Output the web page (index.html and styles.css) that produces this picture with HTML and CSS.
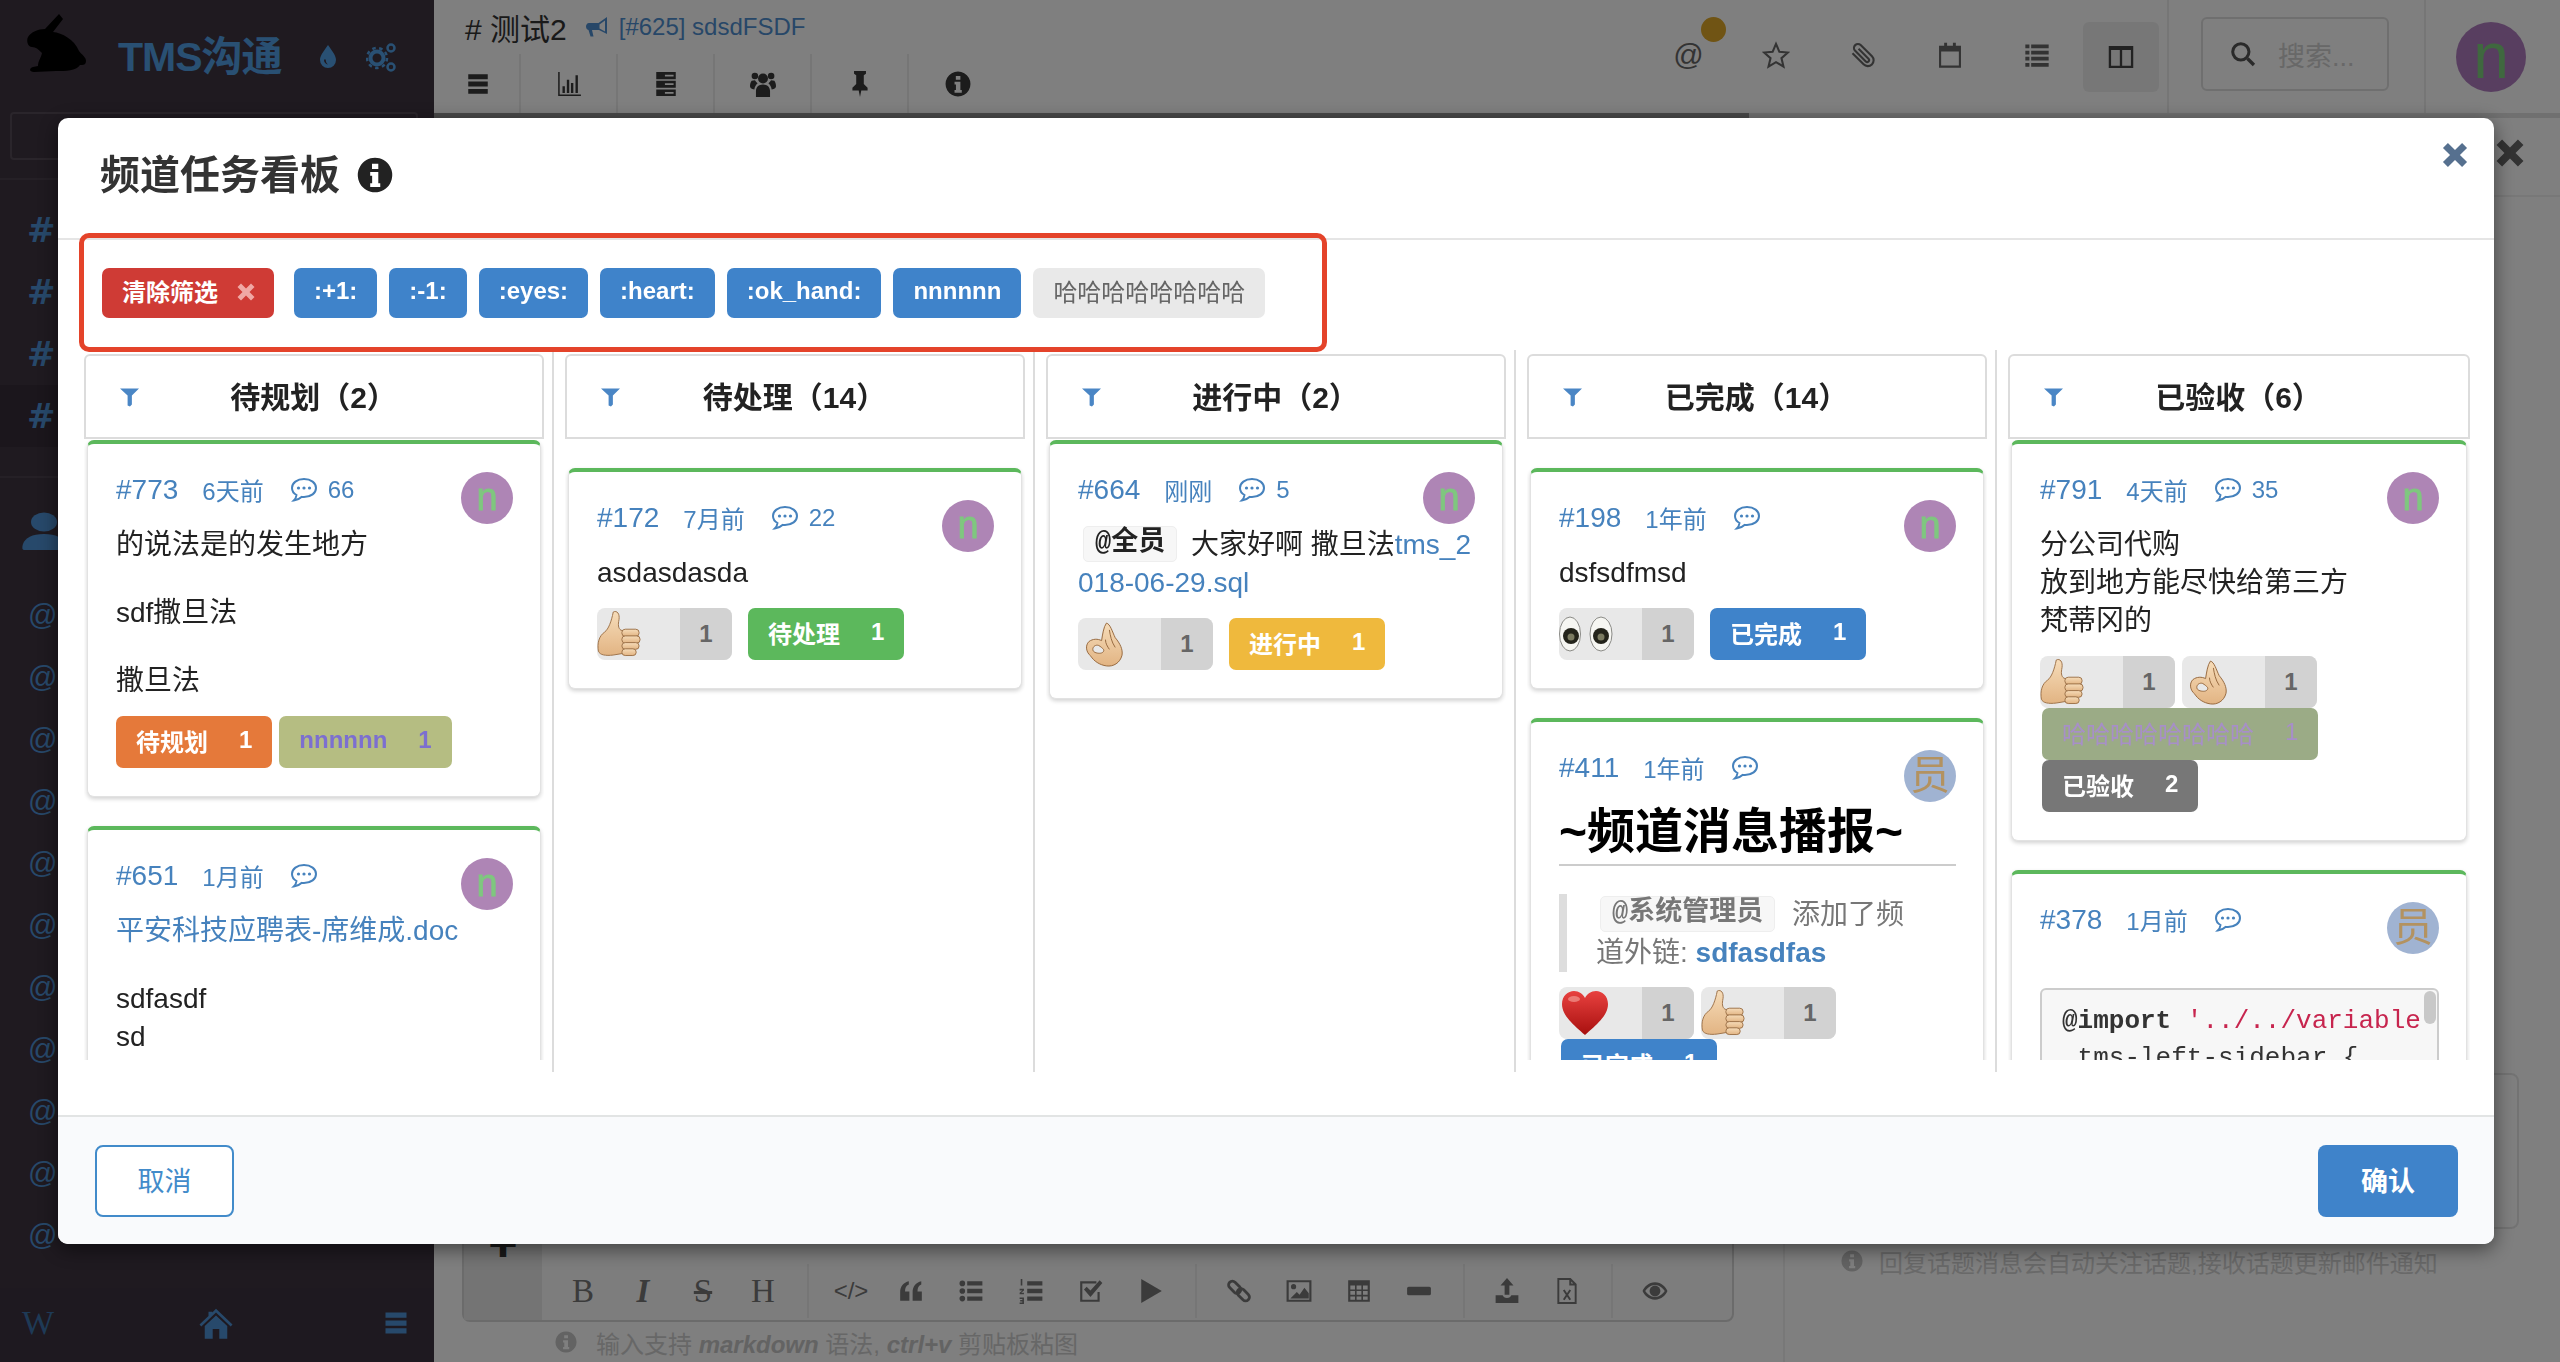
FILE: index.html
```html
<!DOCTYPE html>
<html lang="zh-CN">
<head>
<meta charset="utf-8">
<title>频道任务看板</title>
<link rel="stylesheet" href="styles.css">
</head>
<body>
<svg class="defs" aria-hidden="true">
  <symbol id="i-bars" viewBox="0 0 24 24"><path d="M3 3h18v4.500H3zM3 9.800h18v4.500H3zM3 16.500h18V21H3z"/></symbol>
  <symbol id="i-chart" viewBox="0 0 24 24"><path d="M2 1h1.400v20.600H23V23H2zM6 14h2.200v6.200H6zM10 8h2.200v12.200H10zM13.800 11H16v9.200h-2.200zM18 4h2.200v16.200H18z"/></symbol>
  <symbol id="i-server" viewBox="0 0 24 24"><path fill-rule="evenodd" d="M3 1h18v6.500H3zM11 3.400v1.600h8V3.400zM3 9h18v6.500H3zM11 11.400V13h8v-1.600zM3 17h18v6H3zM11 19.400V21h8v-1.600z"/></symbol>
  <symbol id="i-users" viewBox="0 0 24 24"><circle cx="12" cy="7" r="4.600"/><circle cx="4.500" cy="4.500" r="3"/><circle cx="19.500" cy="4.500" r="3"/><path d="M12 12.500c-4 0-6.500 2.600-6.500 6V24h13v-5.500c0-3.400-2.500-6-6.500-6zM1.500 9c-1 1.500-1.500 3-1.500 5 0 1.500 1 2.500 4 3 .4-2.300 1.400-4.200 3-5.600C6 10.500 5 9 4.500 8.500z"/><path d="M22.500 9c1 1.500 1.500 3 1.500 5 0 1.500-1 2.500-4 3-.4-2.300-1.400-4.200-3-5.600 1-.9 2-2.400 2.500-2.900z"/></symbol>
  <symbol id="i-pin" viewBox="0 0 24 24"><path d="M6.500 0h11v2.500L15.500 4v8l3.500 3.500V18h-5.800L12 24l-1.200-6H5v-2.500L8.500 12V4l-2-1.500z"/></symbol>
  <symbol id="i-info" viewBox="0 0 24 24"><path fill-rule="evenodd" d="M12 .5a11.500 11.500 0 1 0 .01 0zM10 4.500h4.200V8H10zM8.800 10h5.400v7.500h1.300V20H8.800v-2.500h1.300v-5H8.800z"/></symbol>
  <symbol id="i-horn" viewBox="0 0 24 24"><path fill-rule="evenodd" d="M22 2v17l-8-4H7l1.500 6.500H5.500L3.500 15C1.800 14.500 1 13 1 11.500S2 8 4 8h9.500zM20 5.500l-5.500 4v4l5.500 3z"/></symbol>
  <symbol id="i-star" viewBox="0 0 24 24"><path fill="none" stroke="currentColor" stroke-width="1.800" d="M12 2.500l2.900 6.800 7.300.6-5.500 4.800 1.700 7.200-6.400-3.800-6.400 3.800 1.700-7.200-5.500-4.800 7.300-.6z"/></symbol>
  <symbol id="i-clip" viewBox="0 0 24 24"><path transform="translate(24 0) scale(-1 1)" fill="none" stroke="currentColor" stroke-width="1.800" d="M21 10.500l-9.500 9.500a5 5 0 0 1-7.200-7L14 3.500a3.400 3.400 0 0 1 4.900 4.700l-9.300 9.300a1.600 1.600 0 0 1-2.300-2.300l8.500-8.500"/></symbol>
  <symbol id="i-cal" viewBox="0 0 24 24"><path fill="none" stroke="currentColor" stroke-width="1.800" d="M3.500 5h17v17h-17z"/><path d="M3.500 5h17v4h-17zM7 1.500h2.500V6H7zM14.500 1.500H17V6h-2.500z"/></symbol>
  <symbol id="i-list" viewBox="0 0 24 24"><path d="M2 3h3.500v3.200H2zM7 3h15v3.200H7zM2 8.300h3.500v3.200H2zM7 8.300h15v3.200H7zM2 13.600h3.500v3.200H2zM7 13.600h15v3.200H7zM2 18.900h3.500v3.200H2zM7 18.900h15v3.200H7z"/></symbol>
  <symbol id="i-cols" viewBox="0 0 24 24"><path fill="none" stroke="currentColor" stroke-width="2" d="M2.500 3.500h19v17h-19zM12 3.500v17"/><path d="M2.500 3h19v3h-19z"/></symbol>
  <symbol id="i-search" viewBox="0 0 24 24"><circle cx="10" cy="10" r="7.500" fill="none" stroke="currentColor" stroke-width="2.800"/><path d="M15 17.200l2.200-2.200 6 6-2.200 2.200z"/></symbol>
  <symbol id="i-home" viewBox="0 0 24 24"><path d="M12 2.500L23 13l-1.200 1.300L12 5 2.200 14.300 1 13l6-5.700V4.500h2.500v.5zM12 7l7.500 7v8.500h-5.300V16H9.800v6.500H4.500V14z"/></symbol>
  <symbol id="i-user" viewBox="0 0 44 38"><ellipse cx="22" cy="10" rx="13" ry="9.500"/><path d="M2 38c-2 0-2-3-1-6 2-6 9-10 21-10s19 4 21 10c1 3 1 6-1 6z"/></symbol>
  <symbol id="i-drop" viewBox="0 0 24 24"><path fill-rule="evenodd" d="M12 1c4.500 6.500 8 10.500 8 15a8 8 0 0 1-16 0c0-4.500 3.500-8.500 8-15zM8 15.500a4.500 4.500 0 0 0 4 5c-1.500-1-2.300-2.800-2.200-5z"/></symbol>
  <symbol id="i-cogs" viewBox="0 0 32 32"><circle cx="11" cy="17" r="6.500" fill="none" stroke="currentColor" stroke-width="4"/><circle cx="11" cy="17" r="10" fill="none" stroke="currentColor" stroke-width="2.500" stroke-dasharray="3.500 3.500"/><circle cx="25" cy="7" r="3.500" fill="none" stroke="currentColor" stroke-width="2.500"/><circle cx="25" cy="26" r="3.500" fill="none" stroke="currentColor" stroke-width="2.500"/></symbol>
  <symbol id="i-funnel" viewBox="0 0 20 20"><path d="M0 1h20l-7.500 7.500V18L10.500 20 8 19V8.500z"/></symbol>
  <symbol id="i-comment" viewBox="0 0 28 28"><path fill="none" stroke="currentColor" stroke-width="2" d="M14 3C7 3 2 7 2 12c0 3 1.800 5.500 4.500 7-.2 2-1.200 4-2.700 5.500 3.200-.4 5.800-1.800 7.700-3.600.8.100 1.700.100 2.500.100 7 0 12-4 12-9S21 3 14 3z"/><circle cx="8.500" cy="12" r="1.600" fill="currentColor"/><circle cx="14" cy="12" r="1.600" fill="currentColor"/><circle cx="19.500" cy="12" r="1.600" fill="currentColor"/></symbol>
  <symbol id="i-times" viewBox="0 0 24 24"><path d="M3.500 7L7 3.500l5 5 5-5L20.500 7l-5 5 5 5-3.500 3.500-5-5-5 5L3.500 17l5-5z"/></symbol>
  <symbol id="i-quote" viewBox="0 0 24 24"><path d="M10.500 12.500V21H2v-8C2 8 5 4 10 3v3c-2.500.8-3.500 3-3.500 6.500zM22 12.500V21h-8.500v-8c0-5 3-9 8-10v3c-2.500.8-3.500 3-3.500 6.500z"/></symbol>
  <symbol id="i-ul" viewBox="0 0 24 24"><circle cx="4" cy="5" r="2.600"/><circle cx="4" cy="12" r="2.600"/><circle cx="4" cy="19" r="2.600"/><path d="M8.500 3h14v4h-14zM8.500 10h14v4h-14zM8.500 17h14v4h-14z"/></symbol>
  <symbol id="i-ol" viewBox="0 0 24 24"><path d="M2.500 1H4v6H2.500zM1.500 10h4v1.500l-2.500 2h2.500V15H1.500v-1.500l2.500-2H1.500zM1.500 18h4v6h-4v-1.300h2.500v-1h-2v-1.300h2v-1H1.500zM8.500 3h14v4h-14zM8.500 10h14v4h-14zM8.500 17h14v4h-14z"/></symbol>
  <symbol id="i-check" viewBox="0 0 24 24"><path fill="none" stroke="currentColor" stroke-width="2" d="M19 13v8H3V4h14"/><path d="M5.500 10.500L8 8l3.500 3.500L20 2l2.500 2.500-11 13z"/></symbol>
  <symbol id="i-play" viewBox="0 0 24 24"><path d="M3 1l19 11L3 23z"/></symbol>
  <symbol id="i-link" viewBox="0 0 24 24"><g fill="none" stroke="currentColor" stroke-width="2.600"><rect x="1.500" y="5" width="13" height="7" rx="3.500" transform="rotate(45 8 8.500)"/><rect x="9.500" y="12" width="13" height="7" rx="3.500" transform="rotate(45 16 15.500)"/></g></symbol>
  <symbol id="i-image" viewBox="0 0 24 24"><path fill="none" stroke="currentColor" stroke-width="2" d="M1.500 3h21v18h-21z"/><circle cx="7" cy="8" r="2.400"/><path d="M4 19l6-6 2.500 2.500L17 9l4 5v5z"/></symbol>
  <symbol id="i-table" viewBox="0 0 24 24"><path fill-rule="evenodd" d="M2 2h20v20H2zM4 7v3.500h4.300V7zM9.800 7v3.500h4.400V7zM15.700 7v3.500H20V7zM4 12v3.500h4.300V12zM9.800 12v3.500h4.400V12zM15.700 12v3.500H20V12zM4 17v3h4.300v-3zM9.800 17v3h4.400v-3zM15.700 17v3H20v-3z"/></symbol>
  <symbol id="i-minus" viewBox="0 0 24 24"><rect x="1" y="8" width="22" height="8" rx="1.500"/></symbol>
  <symbol id="i-upload" viewBox="0 0 24 24"><path d="M12 0l6 7h-3.800v8.500H9.800V7H6zM1.500 16H8c.5 1.500 2 2.500 4 2.500s3.500-1 4-2.500h6.500v7h-21z"/></symbol>
  <symbol id="i-file" viewBox="0 0 24 24"><path fill="none" stroke="currentColor" stroke-width="1.800" d="M4 1h11l5 5v17H4zM15 1v5h5M9 11l6 9M15 11l-6 9"/></symbol>
  <symbol id="i-eye" viewBox="0 0 24 24"><path fill-rule="evenodd" d="M12 4c6 0 10 4.500 11.500 8C22 15.500 18 20 12 20S2 15.500.5 12C2 8.500 6 4 12 4zM12 6.500c-4 0-7.500 3-9 5.500 1.500 2.500 5 5.500 9 5.500s7.500-3 9-5.500c-1.500-2.500-5-5.500-9-5.500z"/><circle cx="12" cy="12" r="5"/></symbol>
  <symbol id="i-rabbit" viewBox="0 0 60 60"><path d="M33 1l4 5-10 13c9 1 21 7 26 19 3 4 7 6 7 10 0 3-2 4-4 4h-2c-4 6-14 6-24 6L8 59c-5 0-5-4-1-5l5-1c0-5 3-8 4-13-4-4-6-6-10-6-4 0-6-6-4-10 3-5 10-8 17-8z"/></symbol>
  <linearGradient id="g-skin" x1="0" y1="0" x2="0" y2="1"><stop offset="0" stop-color="#f6dcb9"/><stop offset="1" stop-color="#e2b483"/></linearGradient>
  <linearGradient id="g-heart" x1="0" y1="0" x2="0" y2="1"><stop offset="0" stop-color="#e8413f"/><stop offset="1" stop-color="#a8100f"/></linearGradient>
  <symbol id="e-thumb" viewBox="0 0 46 50"><path fill="url(#g-skin)" stroke="#9c7148" stroke-width="1" d="M17 2c4-2 7 2 6 8-1 5-1 9 2 11l4 1v23l-12 2C9 48 3 47 1.500 43 0 35 2 27 8 23c4-3 7-11 9-21z"/><g fill="url(#g-skin)" stroke="#9c7148" stroke-width="1"><rect x="26" y="20" width="18" height="7.500" rx="3.500"/><rect x="26" y="27" width="19" height="7.500" rx="3.500"/><rect x="26" y="34" width="18" height="7" rx="3.500"/><rect x="26" y="40.500" width="15" height="7" rx="3.500"/></g></symbol>
  <symbol id="e-ok" viewBox="0 0 38 46"><path fill="url(#g-skin)" stroke="#96693f" stroke-width="1" fill-rule="evenodd" d="M21 1c4 1 6 9 9 15 5 6 8 12 7 18-2 8-9 12-16 11C14 44 8 40 5 35 0 31-1 24 3 20c4-3 9-3 13-1 1-6 2-14 5-18zM13 24c-3-1-6 1-6 4s4 4 7 4 5-2 4-4c-1-1-3-3-5-4z"/><path fill="none" stroke="#96693f" d="M24 8c1 6 2 12 6 18M20 18c0 4 2 7 4 10"/></symbol>
  <symbol id="e-eyes" viewBox="0 0 54 36"><g stroke="#8a8a86" fill="#f6f6f2"><ellipse cx="11" cy="18" rx="10.500" ry="17"/><ellipse cx="42" cy="18" rx="11" ry="17"/></g><circle cx="12" cy="20" r="8" fill="#23231a"/><circle cx="42" cy="20" r="8" fill="#23231a"/><circle cx="12" cy="21" r="3.500" fill="#7a7a60"/><circle cx="42" cy="21" r="3.500" fill="#7a7a60"/></symbol>
  <symbol id="e-heart" viewBox="0 0 46 44"><path fill="url(#g-heart)" d="M23 44C12 34 0 25 0 13 0 5 6 0 12 0c5 0 9 3 11 7 2-4 6-7 11-7 6 0 12 5 12 13 0 12-12 21-23 31z"/><ellipse cx="12" cy="8" rx="6" ry="3" fill="#f5a8a0" opacity=".6"/></symbol>
</svg>

<div class="app">
  <aside class="sidebar">
    <div class="brand">
      <svg class="rabbit"><use href="#i-rabbit"/></svg>
      <span class="brand-name">TMS沟通</span>
      <svg class="brand-drop"><use href="#i-drop"/></svg>
      <svg class="brand-cogs"><use href="#i-cogs"/></svg>
    </div>
    <div class="side-search"></div>
    <div class="side-list">
      <div class="side-row">#</div>
      <div class="side-row">#</div>
      <div class="side-row">#</div>
      <div class="side-row is-active">#</div>
      <div class="side-sep"></div>
      <div class="side-user"><svg class="side-user-ico"><use href="#i-user"/></svg></div>
      <div class="side-row side-at">@</div>
      <div class="side-row side-at">@</div>
      <div class="side-row side-at">@</div>
      <div class="side-row side-at">@</div>
      <div class="side-row side-at">@</div>
      <div class="side-row side-at">@</div>
      <div class="side-row side-at">@</div>
      <div class="side-row side-at">@</div>
      <div class="side-row side-at">@</div>
      <div class="side-row side-at">@</div>
      <div class="side-row side-at">@</div>
    </div>
    <div class="side-foot">
      <span class="side-w">W</span>
      <svg class="side-foot-ico"><use href="#i-home"/></svg>
      <svg class="side-foot-bars"><use href="#i-bars"/></svg>
    </div>
  </aside>

  <main class="main">
    <header class="topbar">
      <div class="top-left">
        <div class="top-title">
          <span class="channel"># 测试2</span>
          <svg class="horn"><use href="#i-horn"/></svg>
          <span class="notice">[#625] sdsdFSDF</span>
        </div>
        <div class="tools">
          <span class="tool tool-first"><svg class="tool-ico"><use href="#i-bars"/></svg></span>
          <span class="tool"><svg class="tool-ico"><use href="#i-chart"/></svg></span>
          <span class="tool"><svg class="tool-ico"><use href="#i-server"/></svg></span>
          <span class="tool"><svg class="tool-ico"><use href="#i-users"/></svg></span>
          <span class="tool"><svg class="tool-ico"><use href="#i-pin"/></svg></span>
          <span class="tool tool-last"><svg class="tool-ico"><use href="#i-info"/></svg></span>
        </div>
      </div>
      <div class="top-right">
        <span class="top-btn top-at">@<i class="dot"></i></span>
        <span class="top-btn"><svg class="top-ico"><use href="#i-star"/></svg></span>
        <span class="top-btn"><svg class="top-ico"><use href="#i-clip"/></svg></span>
        <span class="top-btn"><svg class="top-ico"><use href="#i-cal"/></svg></span>
        <span class="top-btn"><svg class="top-ico"><use href="#i-list"/></svg></span>
        <span class="top-btn is-on"><svg class="top-ico"><use href="#i-cols"/></svg></span>
        <div class="top-search-wrap">
          <div class="top-search"><svg class="search-ico"><use href="#i-search"/></svg><span>搜索...</span></div>
        </div>
        <div class="top-avatar">n</div>
      </div>
    </header>
    <div class="progress"><div class="progress-bar"></div></div>
    <div class="content">
      <section class="chat">
        <div class="editor">
          <div class="gutter"><span class="plus">✚</span></div>
          <div class="editor-bar">
            <div class="ed-group ed-group-first">
              <span class="ed-btn ed-serif">B</span>
              <span class="ed-btn ed-serif ed-i">I</span>
              <span class="ed-btn ed-serif ed-s">S</span>
              <span class="ed-btn ed-serif">H</span>
            </div>
            <div class="ed-group">
              <span class="ed-btn ed-code">&lt;/&gt;</span>
              <span class="ed-btn"><svg class="ed-ico"><use href="#i-quote"/></svg></span>
              <span class="ed-btn"><svg class="ed-ico"><use href="#i-ul"/></svg></span>
              <span class="ed-btn"><svg class="ed-ico"><use href="#i-ol"/></svg></span>
              <span class="ed-btn"><svg class="ed-ico"><use href="#i-check"/></svg></span>
              <span class="ed-btn"><svg class="ed-ico"><use href="#i-play"/></svg></span>
            </div>
            <div class="ed-group">
              <span class="ed-btn"><svg class="ed-ico"><use href="#i-link"/></svg></span>
              <span class="ed-btn"><svg class="ed-ico"><use href="#i-image"/></svg></span>
              <span class="ed-btn"><svg class="ed-ico"><use href="#i-table"/></svg></span>
              <span class="ed-btn"><svg class="ed-ico"><use href="#i-minus"/></svg></span>
            </div>
            <div class="ed-group">
              <span class="ed-btn"><svg class="ed-ico"><use href="#i-upload"/></svg></span>
              <span class="ed-btn"><svg class="ed-ico"><use href="#i-file"/></svg></span>
            </div>
            <div class="ed-group ed-group-last">
              <span class="ed-btn"><svg class="ed-ico"><use href="#i-eye"/></svg></span>
            </div>
          </div>
        </div>
        <div class="hint"><svg class="hint-ico"><use href="#i-info"/></svg><span>输入支持 <b><i>markdown</i></b> 语法, <b><i>ctrl+v</i></b> 剪贴板粘图</span></div>
      </section>
      <aside class="panel">
        <div class="panel-head"><svg class="panel-x"><use href="#i-times"/></svg></div>
        <div class="panel-fill"></div>
        <div class="panel-box"></div>
        <div class="panel-hint"><svg class="hint-ico"><use href="#i-info"/></svg><span>回复话题消息会自动关注话题,接收话题更新邮件通知</span></div>
      </aside>
    </div>
  </main>
</div>

<div class="modal-layer">
  <div class="modal">
    <div class="modal-head">
      <h2 class="modal-title">频道任务看板</h2>
      <svg class="modal-info"><use href="#i-info"/></svg>
      <svg class="modal-close"><use href="#i-times"/></svg>
    </div>
    <div class="modal-body">
      <div class="highlight"></div>
      <div class="filters">
        <span class="filter filter-clear">清除筛选<svg class="filter-x"><use href="#i-times"/></svg></span>
        <span class="filter">:+1:</span>
        <span class="filter">:-1:</span>
        <span class="filter">:eyes:</span>
        <span class="filter">:heart:</span>
        <span class="filter">:ok_hand:</span>
        <span class="filter">nnnnnn</span>
        <span class="filter filter-gray">哈哈哈哈哈哈哈哈</span>
      </div>
      <div class="board">

        <div class="col">
          <div class="col-head"><svg class="funnel"><use href="#i-funnel"/></svg><span class="col-title">待规划（2）</span></div>
          <div class="list">
            <article class="card">
              <div class="card-top">
                <div class="meta"><a class="m-id">#773</a><span class="m-time">6天前</span><svg class="m-cm"><use href="#i-comment"/></svg><span class="m-count">66</span></div>
                <div class="avatar">n</div>
              </div>
              <div class="body"><p>的说法是的发生地方</p><p>sdf撒旦法</p><p>撒旦法</p></div>
              <div class="chips">
                <span class="chip c-orange">待规划<em>1</em></span>
                <span class="chip c-olive">nnnnnn<em>1</em></span>
              </div>
            </article>
            <article class="card">
              <div class="card-top">
                <div class="meta"><a class="m-id">#651</a><span class="m-time">1月前</span><svg class="m-cm"><use href="#i-comment"/></svg></div>
                <div class="avatar">n</div>
              </div>
              <div class="body"><p><a class="link">平安科技应聘表-席维成.doc</a></p><p>sdfasdf<br>sd</p></div>
            </article>
          </div>
        </div>

        <div class="col">
          <div class="col-head"><svg class="funnel"><use href="#i-funnel"/></svg><span class="col-title">待处理（14）</span></div>
          <div class="list list-gap">
            <article class="card">
              <div class="card-top">
                <div class="meta"><a class="m-id">#172</a><span class="m-time">7月前</span><svg class="m-cm"><use href="#i-comment"/></svg><span class="m-count">22</span></div>
                <div class="avatar">n</div>
              </div>
              <div class="body"><p>asdasdasda</p></div>
              <div class="chips">
                <span class="react"><span class="react-e"><svg class="e-thumb"><use href="#e-thumb"/></svg></span><b>1</b></span>
                <span class="chip c-green chip-after">待处理<em>1</em></span>
              </div>
            </article>
          </div>
        </div>

        <div class="col">
          <div class="col-head"><svg class="funnel"><use href="#i-funnel"/></svg><span class="col-title">进行中（2）</span></div>
          <div class="list">
            <article class="card">
              <div class="card-top">
                <div class="meta"><a class="m-id">#664</a><span class="m-time">刚刚</span><svg class="m-cm"><use href="#i-comment"/></svg><span class="m-count">5</span></div>
                <div class="avatar">n</div>
              </div>
              <div class="body"><p class="breaky"><span class="mention">@全员</span> 大家好啊 撒旦法<a class="link">tms_2018-06-29.sql</a></p></div>
              <div class="chips">
                <span class="react"><span class="react-e"><svg class="e-ok"><use href="#e-ok"/></svg></span><b>1</b></span>
                <span class="chip c-yellow chip-after">进行中<em>1</em></span>
              </div>
            </article>
          </div>
        </div>

        <div class="col">
          <div class="col-head"><svg class="funnel"><use href="#i-funnel"/></svg><span class="col-title">已完成（14）</span></div>
          <div class="list list-gap">
            <article class="card">
              <div class="card-top">
                <div class="meta"><a class="m-id">#198</a><span class="m-time">1年前</span><svg class="m-cm"><use href="#i-comment"/></svg></div>
                <div class="avatar">n</div>
              </div>
              <div class="body"><p>dsfsdfmsd</p></div>
              <div class="chips">
                <span class="react"><span class="react-e"><svg class="e-eyes"><use href="#e-eyes"/></svg></span><b>1</b></span>
                <span class="chip c-blue chip-after">已完成<em>1</em></span>
              </div>
            </article>
            <article class="card">
              <div class="card-top card-top-short">
                <div class="meta"><a class="m-id">#411</a><span class="m-time">1年前</span><svg class="m-cm"><use href="#i-comment"/></svg></div>
                <div class="avatar avatar-staff">员</div>
              </div>
              <h1 class="card-h1">~频道消息播报~</h1>
              <blockquote class="quote"><span class="mention mention-muted">@系统管理员</span> 添加了频道外链: <a class="link link-bold">sdfasdfas</a></blockquote>
              <div class="chips">
                <span class="react"><span class="react-e"><svg class="e-heart"><use href="#e-heart"/></svg></span><b>1</b></span>
                <span class="react"><span class="react-e"><svg class="e-thumb"><use href="#e-thumb"/></svg></span><b>1</b></span>
                <span class="chip c-blue chip-in">已完成<em>1</em></span>
              </div>
            </article>
          </div>
        </div>

        <div class="col col-last">
          <div class="col-head"><svg class="funnel"><use href="#i-funnel"/></svg><span class="col-title">已验收（6）</span></div>
          <div class="list">
            <article class="card">
              <div class="card-top">
                <div class="meta"><a class="m-id">#791</a><span class="m-time">4天前</span><svg class="m-cm"><use href="#i-comment"/></svg><span class="m-count">35</span></div>
                <div class="avatar">n</div>
              </div>
              <div class="body"><p>分公司代购<br>放到地方能尽快给第三方<br>梵蒂冈的</p></div>
              <div class="chips">
                <span class="react"><span class="react-e"><svg class="e-thumb"><use href="#e-thumb"/></svg></span><b>1</b></span>
                <span class="react"><span class="react-e"><svg class="e-ok"><use href="#e-ok"/></svg></span><b>1</b></span>
                <span class="chip c-sage chip-in">哈哈哈哈哈哈哈哈<em>1</em></span>
                <span class="chip c-gray chip-in">已验收<em>2</em></span>
              </div>
            </article>
            <article class="card">
              <div class="card-top">
                <div class="meta"><a class="m-id">#378</a><span class="m-time">1月前</span><svg class="m-cm"><use href="#i-comment"/></svg></div>
                <div class="avatar avatar-staff">员</div>
              </div>
              <pre class="code"><i class="code-thumb"></i><b>@import</b> <span class="code-str">'../../variable</span>
 tms-left-sidebar {</pre>
            </article>
          </div>
        </div>

      </div>
    </div>
    <div class="modal-foot">
      <button class="btn btn-ghost">取消</button>
      <button class="btn btn-primary">确认</button>
    </div>
  </div>
</div>
</body>
</html>
```

FILE: styles.css
```css
* { box-sizing: border-box; }
html, body { margin: 0; height: 100%; overflow: hidden; }
body { font-family: "Liberation Sans", "Noto Sans CJK SC", sans-serif; color: #222; background: #fff; }
svg { fill: currentColor; display: block; flex: none; }
.defs { width: 0; height: 0; position: absolute; }

.app { display: grid; grid-template-columns: 434px 1fr; height: 100vh; }

/* sidebar */
.sidebar { background: #3e3440; color: #4f8fd0; display: flex; flex-direction: column; overflow: hidden; }
.brand { height: 112px; display: flex; align-items: flex-start; }
.rabbit { width: 60px; height: 60px; color: #000; margin: 13px 0 0 26px; }
.brand-name { margin: 33px 0 0 32px; width: 165px; font-size: 41px; line-height: 48px; font-weight: 700; color: #52a0e6; white-space: nowrap; letter-spacing: -1px; }
.brand-drop { width: 24px; height: 26px; margin: 43px 0 0 33px; color: #52a0e6; }
.brand-cogs { width: 32px; height: 32px; margin: 41px 0 0 26px; color: #52a0e6; }
.side-search { height: 48px; margin: 0 16px 18px 10px; border: 2px solid #544a56; border-radius: 4px; }
.side-list { flex: 1; overflow: hidden; padding-top: 19px; border-top: 2px solid #4a404c; }
.side-row { height: 62px; display: flex; align-items: center; padding-left: 27px; font-family: "DejaVu Sans", sans-serif; font-weight: 700; font-size: 34px; color: #4f92d6; }
.side-row.is-active { background: #362c38; }
.side-sep { margin-top: 29px; border-top: 2px solid #4a404c; }
.side-user { height: 106px; display: flex; align-items: center; padding-left: 22px; }
.side-user-ico { width: 44px; height: 38px; color: #4f92d6; }
.side-at { font-family: "Liberation Sans", sans-serif; font-weight: 400; font-size: 29px; padding-left: 28px; }
.side-foot { height: 74px; background: #3d3340; display: flex; align-items: center; justify-content: space-between; padding: 0 24px 4px 22px; color: #4f92d6; }
.side-w { font-family: "Liberation Serif", serif; font-size: 34px; color: #3c74ac; }
.side-foot-ico { width: 36px; height: 36px; margin-right: 4px; }
.side-foot-bars { width: 28px; height: 28px; }

/* main */
.main { display: flex; flex-direction: column; min-width: 0; background: #fefefe; }
.topbar { height: 113px; display: flex; justify-content: space-between; flex: none; }
.progress { height: 5px; flex: none; background: #e0e0e0; }
.progress-bar { width: 1315px; height: 100%; background: #929292; }
.top-left { padding-left: 31px; display: flex; flex-direction: column; }
.top-title { height: 54px; display: flex; align-items: center; }
.channel { font-size: 30px; color: #333; }
.horn { width: 24px; height: 24px; margin-left: 18px; color: #4f8fd0; }
.notice { margin-left: 10px; font-size: 24px; color: #4f8fd0; }
.tools { display: flex; flex: 1; }
.tool { width: 97px; display: flex; align-items: center; justify-content: center; border-right: 2px solid #ededed; color: #383838; }
.tool-first { width: 56px; justify-content: flex-start; }
.tool-last { border-right: 0; }
.tool-ico { width: 26px; height: 26px; }
.top-right { display: flex; align-items: center; height: 113px; padding-right: 0; }
.top-btn { width: 87px; height: 70px; display: flex; align-items: center; justify-content: center; color: #666; position: relative; top: -2px; }
.top-at { font-size: 30px; }
.dot { position: absolute; width: 25px; height: 25px; border-radius: 50%; background: #e0a828; top: -3px; left: 56px; }
.top-ico { width: 28px; height: 30px; }
.is-on { width: 76px; height: 70px; background: #efefef; margin: 0 8px 0 3px; border-radius: 6px; color: #444; top: 0; }
.top-search-wrap { height: 113px; padding: 17px 35px 22px 32px; border-left: 2px solid #ededed; border-right: 2px solid #ededed; }
.top-search { width: 188px; height: 74px; border: 2px solid #dedede; border-radius: 6px; display: flex; align-items: center; padding-left: 27px; font-size: 27px; color: #d0d0d0; gap: 22px; }
.search-ico { width: 26px; height: 26px; color: #555; }
.top-avatar { width: 70px; height: 70px; border-radius: 50%; margin: 0 34px 0 30px; background: #b07dc0; color: #7ed07e; font-size: 64px; line-height: 68px; text-align: center; }

.content { flex: 1; display: grid; grid-template-columns: 1349px 1fr; min-height: 0; }
.chat { display: flex; flex-direction: column; justify-content: flex-end; padding: 0 49px 0 28px; }
.editor { height: 140px; display: flex; border: 2px solid #d6d6d6; border-radius: 8px; background: #fbfbfb; }
.gutter { width: 78px; background: #e8e8e8; display: flex; justify-content: center; padding-top: 46px; }
.plus { font-size: 30px; color: #333; line-height: 30px; }
.editor-bar { flex: 1; display: flex; align-items: flex-end; padding: 0 0 2px 11px; }
.ed-group { display: flex; height: 54px; border-right: 2px solid #ededed; padding: 0 14px 0 12px; color: #777; }
.ed-group-first { padding-left: 0; }
.ed-group-last { border-right: 0; }
.ed-btn { width: 60px; display: flex; align-items: center; justify-content: center; }
.ed-serif { font-family: "Liberation Serif", serif; font-size: 33px; font-weight: 400; }
.ed-i { font-style: italic; font-weight: 700; }
.ed-s { text-decoration: line-through; }
.ed-code { font-family: "Liberation Sans", sans-serif; font-size: 24px; }
.ed-ico { width: 26px; height: 26px; }
.hint { height: 40px; display: flex; align-items: center; font-size: 24px; color: #cfcfcf; gap: 19px; padding-left: 94px; white-space: nowrap; margin-left: -1px; }
.hint b { color: #c6c6c6; }
.hint-ico { width: 22px; height: 22px; color: #c6c6c6; }
.panel { border-left: 2px solid #f0f0f0; display: flex; flex-direction: column; padding-right: 41px; }
.panel-head { height: 79px; margin-right: -41px; border-bottom: 2px solid #f0f0f0; padding: 16px 0 0 706px; }
.panel-x { width: 38px; height: 38px; color: #666; }
.panel-fill { flex: 1; }
.panel-box { height: 156px; border: 2px solid #e6e6e6; border-radius: 8px; }
.panel-hint { height: 34px; margin: 15px 0 84px 56px; display: flex; align-items: center; gap: 16px; font-size: 24px; color: #d2d2d2; white-space: nowrap; }

/* modal */
.modal-layer { position: fixed; inset: 0; background: rgba(0, 0, 0, .5); padding: 118px 66px 118px 58px; }
.modal { position: relative; height: 100%; background: #fff; border-radius: 10px; box-shadow: 0 5px 20px rgba(0, 0, 0, .5); display: flex; flex-direction: column; overflow: hidden; }
.modal-head { height: 122px; flex: none; display: flex; align-items: center; gap: 17px; padding: 0 0 6px 42px; border-bottom: 2px solid #e5e5e5; }
.modal-title { margin: 0; font-size: 40px; font-weight: 700; color: #333; line-height: 56px; }
.modal-info { width: 36px; height: 36px; color: #222; }
.modal-close { position: absolute; right: 22px; top: 20px; width: 34px; height: 34px; color: #56708f; }
.modal-body { flex: 1; min-height: 0; position: relative; padding-top: 28px; }
.highlight { position: absolute; left: 21px; top: -7px; width: 1248px; height: 119px; border: 5px solid #e4432a; border-radius: 10px; z-index: 2; pointer-events: none; }
.filters { display: flex; gap: 12px; padding-left: 44px; height: 50px; margin-bottom: 32px; }
.filter { height: 50px; display: flex; align-items: center; padding: 0 20px 5px; border-radius: 7px; background: #3f83ca; color: #fff; font-size: 24px; font-weight: 700; white-space: nowrap; }
.filter-clear { background: #cf3b35; width: 172px; margin-right: 8px; justify-content: space-between; padding: 0 16px 5px 20px; }
.filter-x { width: 24px; height: 24px; color: #f0a8a4; margin-top: 3px; }
.filter-gray { background: #e9e9e9; color: #666; font-weight: 400; }

.board { display: grid; grid-template-columns: repeat(5, 481px); margin-left: 15px; height: 722px; }
.col { display: flex; flex-direction: column; min-height: 0; padding: 4px 8px 12px 11px; border-right: 2px solid #dcdcdc; }
.col-last { border-right: 0; }
.col-head { height: 85px; flex: none; display: flex; align-items: center; padding: 0 54px 4px 34px; border: 2px solid #dcdcdc; border-radius: 6px 6px 0 0; }
.funnel { width: 19px; height: 20px; color: #4a86c5; margin-top: 4px; }
.col-title { flex: 1; text-align: center; font-size: 30px; font-weight: 700; color: #222; white-space: nowrap; }
.list { flex: 1; min-height: 0; overflow: hidden; margin-top: 1px; padding: 0 3px; }
.list-gap { padding-top: 28px; }

.card { background: #fff; border: 1px solid #e2e2e2; border-top: 4px solid #5cb85c; border-radius: 7px; box-shadow: 0 2px 4px rgba(0, 0, 0, .18); padding: 28px 27px 28px 28px; margin-bottom: 29px; }
.card-top { display: flex; justify-content: space-between; height: 54px; }
.meta { display: flex; align-items: center; height: 36px; color: #4682bd; }
.m-id { font-size: 28px; margin-right: 24px; }
.m-time { font-size: 24px; margin-right: 26px; padding-bottom: 2px; }
.m-cm { width: 28px; height: 28px; }
.m-count { font-size: 24px; margin-left: 10px; }
.avatar { width: 52px; height: 52px; flex: none; border-radius: 50%; background: #ae85b5; color: #7fc77f; font-size: 38px; -webkit-text-stroke: .8px #7fc77f; line-height: 50px; text-align: center; }
.avatar-staff { background: #a0b3d2; color: #b39260; font-size: 40px; -webkit-text-stroke: 0; }

.body { font-size: 28px; line-height: 38px; color: #222; margin-bottom: 16px; }
.body p { margin: 0 0 30px; }
.body p:last-child { margin-bottom: 0; }
.breaky { word-break: break-all; }
.link { color: #4682bd; }
.link-bold { font-weight: 700; }
.mention { display: inline-block; margin: 0 6px 0 5px; padding: 0 11px; height: 36px; line-height: 33px; border: 1px solid #eee; border-radius: 5px; background: #f7f7f7; font-weight: 700; font-size: 27px; color: #222; font-family: "Liberation Mono", "Noto Sans CJK SC", monospace; vertical-align: top; }
.mention-muted { color: #777; margin: 0 9px 0 4px; }

.chips { display: flex; flex-wrap: wrap; gap: 0 7px; }
.chip { height: 52px; display: inline-flex; align-items: center; padding: 0 20px 4px; border-radius: 7px; font-size: 24px; font-weight: 700; color: #fff; white-space: nowrap; }
.chip em { font-style: normal; margin-left: 31px; }
.chip-after { margin-left: 9px; }
.chip-in { margin-left: 2px; }
.c-orange { background: #e5793a; }
.c-olive { background: #b5bd82; color: #7c6fd0; }
.c-green { background: #5cb85c; }
.c-yellow { background: #efb93d; }
.c-blue { background: #3f83ca; }
.c-sage { background: #9bab86; color: #a78fc8; font-weight: 400; }
.c-gray { background: #777; }
.react { width: 135px; height: 52px; display: inline-flex; border-radius: 8px; overflow: hidden; background: #e8e8e8; }
.react-e { width: 83px; display: flex; align-items: center; }
.react b { flex: 1; background: #d2d2d2; color: #666; font-size: 24px; display: flex; align-items: center; justify-content: center; }
.e-thumb { width: 44px; height: 48px; }
.e-ok { width: 37px; height: 45px; margin-left: 8px; }
.e-eyes { width: 54px; height: 36px; }
.e-heart { width: 46px; height: 44px; margin-left: 3px; }

.card-top-short { height: 52px; }
.card-h1 { margin: 0; font-size: 48px; line-height: 60px; font-weight: 700; color: #000; white-space: nowrap; border-bottom: 2px solid #ccc; padding-bottom: 2px; height: 64px; }
.quote { margin: 28px 0 15px; padding: 2px 30px 0 29px; border-left: 8px solid #ddd; font-size: 28px; line-height: 38px; color: #777; }
.quote .mention { height: 36px; }

.code { position: relative; margin: 32px 0 0; padding: 13px 14px 0 20px; border: 2px solid #ccc; border-radius: 6px; background: #f7f7f7; font-family: "Liberation Mono", monospace; font-size: 26px; line-height: 37px; color: #333; overflow: hidden; height: 200px; white-space: pre; }
.code-str { color: #c7254e; }
.code-thumb { position: absolute; right: 1px; top: 1px; width: 12px; height: 33px; border-radius: 6px; background: #c8c8c8; }

.modal-foot { height: 129px; flex: none; display: flex; justify-content: space-between; align-items: center; padding: 0 36px 0 37px; background: #f9fafc; border-top: 2px solid #e2e4e4; }
.btn { width: 140px; height: 72px; border-radius: 8px; font-family: inherit; font-size: 27px; padding: 0 0 3px; }
.btn-ghost { width: 139px; background: #fff; border: 2px solid #428bca; color: #428bca; }
.btn-primary { background: #3f83ca; border: 0; color: #fff; font-weight: 700; }
```
